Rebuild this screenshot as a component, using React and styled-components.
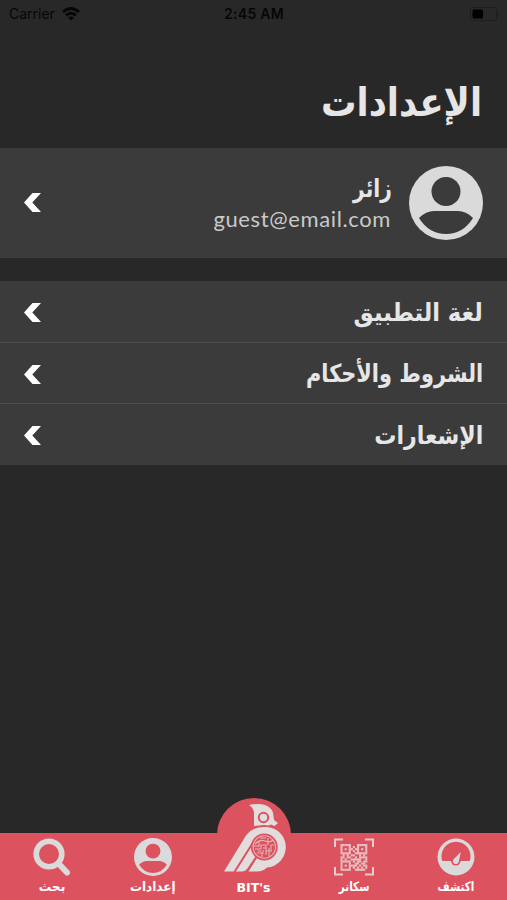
import React from "react";
import styled, { createGlobalStyle } from "styled-components";

const GlobalStyle = createGlobalStyle`
  * { box-sizing: border-box; }
  body { margin: 0; background: #282828; }
`;
const Screen = styled.main`
  width: 507px;
  height: 900px;
  display: flex;
  flex-direction: column;
  overflow: hidden;
  background: #282828;
  color: #e6e6e6;
  font-family: "DejaVu Sans", sans-serif;
`;
const StatusBar = styled.div`
  height: 28px;
  flex: none;
  display: grid;
  grid-template-columns: 1fr auto 1fr;
  align-items: center;
  padding: 0 8px 0 9px;
  color: #060606;
  font: 400 14px/28px Inter, sans-serif;
`;
const Carrier = styled.div`
  display: flex;
  align-items: center;
  gap: 7px;
`;
const Clock = styled.div`
  font-weight: 600;
  letter-spacing: 0.3px;
`;
const BatterySlot = styled.div`
  display: flex;
  justify-content: flex-end;
`;
const Fit = styled.span`
  display: inline-block;
  white-space: nowrap;
  transform: scaleX(${(p) => p.$x || 1});
  transform-origin: ${(p) => p.$origin || "right"} center;
`;
const Title = styled.h1`
  height: 120px;
  flex: none;
  margin: 0;
  padding: 53px 25px 0;
  font-size: 40px;
  line-height: 43px;
  font-weight: 700;
`;
const Profile = styled.section`
  height: 110px;
  flex: none;
  display: flex;
  align-items: center;
  padding: 0 24px 1px;
  background: #3b3b3b;
`;
const Identity = styled.div`
  flex: 1;
  margin: 0 17px;
  height: 56px;
`;
const Name = styled.div`
  font-size: 25px;
  line-height: 28px;
  font-weight: 700;
`;
const Email = styled.div`
  direction: ltr;
  text-align: right;
  padding-right: 1px;
  font: 400 22px/31px Lato, sans-serif;
  letter-spacing: 0.62px;
  color: #c9c9c9;
`;
const List = styled.nav`
  margin-top: 23px;
  flex: none;
  background: #3b3b3b;
`;
const Row = styled.div`
  height: 61px;
  display: flex;
  align-items: center;
  justify-content: space-between;
  padding: 2px 24px 0;
  font-size: 25px;
  line-height: 30px;
  font-weight: 700;
  & + & { border-top: 1px solid #4d4d4d; }
  &:last-child { height: 62px; }
`;
const TabBar = styled.footer`
  margin-top: auto;
  height: 67px;
  flex: none;
  display: grid;
  grid-template-columns: repeat(5, 1fr);
  padding-left: 1px;
  background: #dc525e;
`;
const Tab = styled.div`
  display: flex;
  flex-direction: column;
  align-items: center;
  padding-top: 5px;
  padding-right: ${(p) => p.$inset || 0}px;
  font-size: 13px;
  line-height: 21px;
  font-weight: 700;
  color: #fff;
`;
const HomeTab = styled(Tab)`
  margin-top: -35px;
  padding: 0 1px 0 0;
  font-size: 12.5px;
  line-height: 19px;
`;
const HomeCircle = styled.div`
  width: 74px;
  height: 80px;
  border-radius: 37px 37px 0 0;
  background: #dc525e;
`;

const Chevron = () => (
  <svg width="17" height="19" viewBox="0 0 17 19"><path d="M8.5 0H17L8.3 9.5L17 19H8.5L0 9.5Z" fill="#fff" /></svg>
);
const Wifi = () => (
  <svg width="18" height="14" viewBox="0 0 18 14" fill="none" stroke="#060606" strokeWidth="2.8">
    <path d="M1 5Q9-2 17 5M4 8.4Q9 4 14 8.4" /><path d="M6 10.6Q9 8.4 12 10.6L9 13.6Z" fill="#060606" stroke="none" />
  </svg>
);
const Battery = () => (
  <svg width="29" height="14" viewBox="0 0 29 14"><rect x=".5" y=".5" width="26" height="13" rx="2" fill="none" stroke="#1e1e1e" /><rect x="2.5" y="2.5" width="10.5" height="9" rx="1.5" fill="#000" /><path d="M28 4.5v5" stroke="#1e1e1e" /></svg>
);
const User = ({ size, hole }) => (
  <svg width={size} height={size} viewBox="0 0 74 74">
    <circle cx="37" cy="37" r="37" fill="#dadada" />
    <circle cx="37" cy="25.5" r="14.5" fill={hole} />
    <path d="M10 52Q17 45 25 45H49Q57 45 64 52Q54 68 37 68T10 52Z" fill={hole} />
  </svg>
);
const Gauge = () => (
  <svg width="38" height="38" viewBox="0 0 38 38">
    <circle cx="19" cy="19" r="18.5" fill="#dadada" />
    <path d="M5.3 23A14.5 14.5 0 1 1 32.7 23Z" fill="#dc525e" />
    <circle cx="18.8" cy="22.8" r="4.8" fill="#dc525e" />
    <path d="M23.8 14L21.8 23.8A3 3 0 1 1 16.4 21.4Z" fill="#dadada" />
  </svg>
);
const Search = () => (
  <svg width="38" height="38" viewBox="0 0 38 38" fill="none" stroke="#dadada"><circle cx="16" cy="16" r="12.8" strokeWidth="5.6" /><path d="M26 26L34 34.5" strokeWidth="6" strokeLinecap="round" /></svg>
);

const modules = [
  "1111100011111", "1000101010001", "1010110110101", "1000101010001",
  "1111100111111", "0101011001010", "1101100101111", "1010011111001",
  "1111101011011", "1000100110110", "1010111101011", "1000101010101", "1111100111110",
];
const Scan = () => (
  <svg width="40" height="38" viewBox="0 0 40 38">
    <path d="M1 9V1.5H9M31 1.5H39V9M39 29V36.5H31M9 36.5H1V29" fill="none" stroke="#e2cdce" strokeWidth="2" />
    <g fill="#e6c3c5">
      {modules.flatMap((line, y) => [...line].map((m, x) => m === "1" && <rect key={`${x}-${y}`} x={6.5 + x * 2.06} y={6 + y * 2.06} width="2.1" height="2.1" />))}
    </g>
  </svg>
);
const Bird = () => (
  <svg width="74" height="80" viewBox="0 0 74 80">
    <g fill="#e2dcdc">
      <path d="M32 7Q42 5 48 7Q54 9 56 14.5L57 22L61 25L57.5 28L54 26.5Q52 28 47 27L37 28V14Q36 9.5 32 7Z" />
      <path d="M7 73.5L29 37.5Q35 29 47 29A20.3 20.3 0 0 1 50 69.5Q46 73.5 40 73.5H31L40 59L35 53L24 71Q22 73.5 17 73.5Z" />
      <path d="M18.5 73.5L34 49L39 58L30 71Q28 73.5 25 73.5Z" />
    </g>
    <g fill="none" stroke="#dc525e">
      <path d="M17.5 74L36 44.5M30 74L40 58" strokeWidth="2" />
      <circle cx="46.5" cy="19.5" r="4.7" strokeWidth="2" />
    </g>
    <circle cx="47.3" cy="49" r="13.4" fill="#dc525e" />
    <g fill="none" stroke="#e2b5b9" strokeWidth="1.1">
      <circle cx="47.3" cy="49" r="11.2" />
      <path d="M38 46q5-5 10-3t8-1M38 51h6v-4h5v6h5v-6h3M40 55h6v-3M49 57v-4h6M42 43v6M51 40v7M45 55v4M37 48h5M43 40h6M41 53h3M52 50v8M46 50h3" />
    </g>
  </svg>
);

const rows = [["لغة التطبيق", 0.905], ["الشروط والأحكام", 0.835], ["الإشعارات", 0.885]];

export default function App() {
  return (
    <>
      <GlobalStyle />
      <Screen dir="rtl">
        <StatusBar dir="ltr"><Carrier>Carrier <Wifi /></Carrier><Clock>2:45 AM</Clock><BatterySlot><Battery /></BatterySlot></StatusBar>
        <Title><Fit $x={0.885}>الإعدادات</Fit></Title>
        <Profile><User size={74} hole="#3b3b3b" /><Identity><Name><Fit $x={0.81}>زائر</Fit></Name><Email>guest@email.com</Email></Identity><Chevron /></Profile>
        <List>{rows.map(([t, x]) => <Row key={t}><Fit $x={x}>{t}</Fit><Chevron /></Row>)}</List>
        <TabBar>
          <Tab><Gauge /><Fit $x={0.8} $origin="center">اكتشف</Fit></Tab>
          <Tab $inset={3}><Scan /><Fit $x={0.8} $origin="center">سكانر</Fit></Tab>
          <HomeTab><HomeCircle><Bird /></HomeCircle><span>BIT's</span></HomeTab>
          <Tab><User size={38} hole="#dc525e" /><Fit $x={0.92} $origin="center">إعدادات</Fit></Tab>
          <Tab><Search /><Fit $x={0.95} $origin="center">بحث</Fit></Tab>
        </TabBar>
      </Screen>
    </>
  );
}
